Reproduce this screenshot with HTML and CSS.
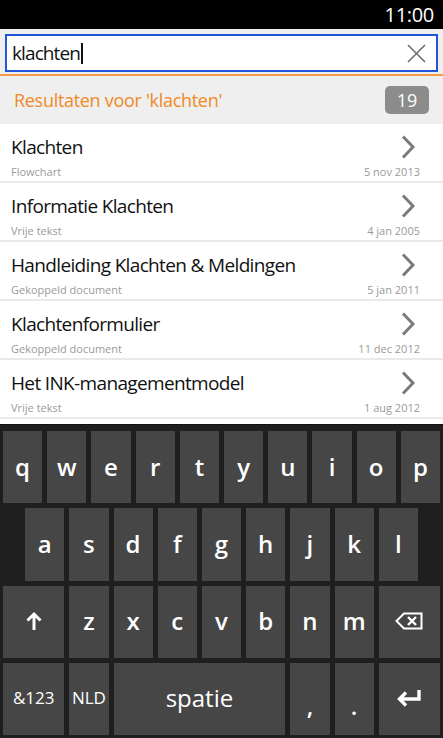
FILE: index.html
```html
<!DOCTYPE html>
<html lang="nl">
<head>
    <meta charset="UTF-8">
    <meta name="viewport" content="width=device-width, initial-scale=1.0">
    <title>Zoeken</title>
    <link rel="stylesheet" href="styles.css">
</head>
<body>
    <div class="status">11:00</div>

    <div class="search-wrap">
        <div class="search">
            <span class="query">klachten</span><span class="caret"></span>
            <svg class="clear" width="21" height="21" viewBox="0 0 21 21">
                <path d="M2 2 L19 19 M19 2 L2 19" stroke="#6e6e6e" stroke-width="1.6" fill="none"/>
            </svg>
        </div>
    </div>

    <div class="results">
        <span class="results-title">Resultaten voor 'klachten'</span>
        <span class="badge">19</span>
    </div>

    <ul class="list">
        <li class="item">
            <div class="item-top"><span class="title">Klachten</span><svg class="chev" width="14" height="24" viewBox="0 0 14 24"><polyline points="2,1.5 12,12 2,22.5" stroke="#7a7a7a" stroke-width="3" fill="none"/></svg></div>
            <div class="item-sub"><span>Flowchart</span><span>5 nov 2013</span></div>
        </li>
        <li class="item">
            <div class="item-top"><span class="title">Informatie Klachten</span><svg class="chev" width="14" height="24" viewBox="0 0 14 24"><polyline points="2,1.5 12,12 2,22.5" stroke="#7a7a7a" stroke-width="3" fill="none"/></svg></div>
            <div class="item-sub"><span>Vrije tekst</span><span>4 jan 2005</span></div>
        </li>
        <li class="item">
            <div class="item-top"><span class="title">Handleiding Klachten &amp; Meldingen</span><svg class="chev" width="14" height="24" viewBox="0 0 14 24"><polyline points="2,1.5 12,12 2,22.5" stroke="#7a7a7a" stroke-width="3" fill="none"/></svg></div>
            <div class="item-sub"><span>Gekoppeld document</span><span>5 jan 2011</span></div>
        </li>
        <li class="item">
            <div class="item-top"><span class="title">Klachtenformulier</span><svg class="chev" width="14" height="24" viewBox="0 0 14 24"><polyline points="2,1.5 12,12 2,22.5" stroke="#7a7a7a" stroke-width="3" fill="none"/></svg></div>
            <div class="item-sub"><span>Gekoppeld document</span><span>11 dec 2012</span></div>
        </li>
        <li class="item">
            <div class="item-top"><span class="title">Het INK-managementmodel</span><svg class="chev" width="14" height="24" viewBox="0 0 14 24"><polyline points="2,1.5 12,12 2,22.5" stroke="#7a7a7a" stroke-width="3" fill="none"/></svg></div>
            <div class="item-sub"><span>Vrije tekst</span><span>1 aug 2012</span></div>
        </li>
    </ul>

    <div class="keyboard">
        <div class="key">q</div>
        <div class="key">w</div>
        <div class="key">e</div>
        <div class="key">r</div>
        <div class="key">t</div>
        <div class="key">y</div>
        <div class="key">u</div>
        <div class="key">i</div>
        <div class="key">o</div>
        <div class="key">p</div>

        <div class="key row2-first">a</div>
        <div class="key">s</div>
        <div class="key">d</div>
        <div class="key">f</div>
        <div class="key">g</div>
        <div class="key">h</div>
        <div class="key">j</div>
        <div class="key">k</div>
        <div class="key">l</div>

        <div class="key wide">
            <svg width="16" height="20" viewBox="0 0 16 20"><path d="M8 19 V3 M1.5 9.5 L8 3 L14.5 9.5" stroke="#fff" stroke-width="3" fill="none"/></svg>
        </div>
        <div class="key">z</div>
        <div class="key">x</div>
        <div class="key">c</div>
        <div class="key">v</div>
        <div class="key">b</div>
        <div class="key">n</div>
        <div class="key">m</div>
        <div class="key wide">
            <svg width="28" height="18" viewBox="0 0 28 18"><path d="M9 1.5 H26.5 V16.5 H9 L1.5 9 Z" stroke="#fff" stroke-width="2" fill="none" stroke-linejoin="miter"/><path d="M13 5 L21 13 M21 5 L13 13" stroke="#fff" stroke-width="2.4"/></svg>
        </div>

        <div class="key wide small">&amp;123</div>
        <div class="key small">NLD</div>
        <div class="key space">spatie</div>
        <div class="key punct">,</div>
        <div class="key punct">.</div>
        <div class="key wide">
            <svg width="26" height="18" viewBox="0 0 26 18"><path d="M23 1 V10 H4 M10 3.5 L3.5 10 L10 16.5" stroke="#fff" stroke-width="3.4" fill="none"/></svg>
        </div>
    </div>
</body>
</html>
```

FILE: styles.css
```css
* {
    box-sizing: border-box;
}
body {
    margin: 0;
    width: 443px;
    height: 738px;
    overflow: hidden;
    font-family: "Open Sans", "Noto Sans", sans-serif;
    background: #ffffff;
}
.status {
    height: 29px;
    background: #000;
    color: #fff;
    font-size: 20px;
    line-height: 30px;
    text-align: right;
    padding-right: 9px;
    letter-spacing: -0.3px;
}
.search-wrap {
    background: #efefef;
    padding: 5px 5px 0;
    height: 47px;
    border-bottom: 2px solid #f39c44;
}
.search {
    height: 38px;
    border: 2px solid #1f56d8;
    background: #fff;
    display: flex;
    align-items: center;
    padding: 0 8px 0 5px;
}
.query {
    font-size: 19px;
    color: #111;
    letter-spacing: -0.9px;
    padding-bottom: 1px;
}
.caret {
    width: 2px;
    height: 21px;
    background: #111;
    margin-left: 1px;
}
.clear {
    margin-left: auto;
    margin-right: 1px;
}
.results {
    height: 48px;
    background: #efefef;
    display: flex;
    align-items: center;
    justify-content: space-between;
    padding: 0 14px 0 14px;
}
.results-title {
    color: #f08a24;
    font-size: 18px;
    letter-spacing: -0.3px;
}
.badge {
    background: #8c8c8c;
    color: #fff;
    font-size: 18px;
    width: 44px;
    height: 28px;
    line-height: 28px;
    text-align: center;
    border-radius: 5px;
}
.list {
    list-style: none;
    margin: 0;
    padding: 0;
}
.item {
    height: 59px;
    border-bottom: 2px solid #e9e9e9;
    padding: 9px 23px 0 11px;
}
.item-top {
    display: flex;
    align-items: center;
    justify-content: space-between;
    height: 28px;
}
.title {
    font-size: 19px;
    color: #111;
    letter-spacing: -0.65px;
}
.chev {
    margin-right: 5px;
}
.item-sub {
    display: flex;
    justify-content: space-between;
    font-size: 11px;
    color: #9a9a9a;
    margin-top: 3px;
    line-height: 16px;
}
.keyboard {
    position: absolute;
    top: 424px;
    left: 0;
    width: 443px;
    height: 314px;
    background: #1f1f1f;
    border-top: 1px solid #111;
    display: grid;
    grid-template-columns: repeat(20, 1fr);
    grid-template-rows: repeat(4, 1fr);
    row-gap: 5px;
    padding: 6px 0.5px 3px;
}
.key {
    grid-column: span 2;
    margin: 0 2.5px;
    background: #464646;
    color: #fff;
    font-size: 24px;
    font-weight: 600;
    display: flex;
    align-items: center;
    justify-content: center;
    padding-bottom: 2px;
}
.row2-first {
    grid-column: 2 / span 2;
}
.key.wide {
    grid-column: span 3;
}
.key.small {
    font-size: 17px;
    font-weight: 500;
}
.key.space {
    grid-column: span 8;
    font-weight: 500;
}
.key.punct {
    padding-top: 16px;
}
```
